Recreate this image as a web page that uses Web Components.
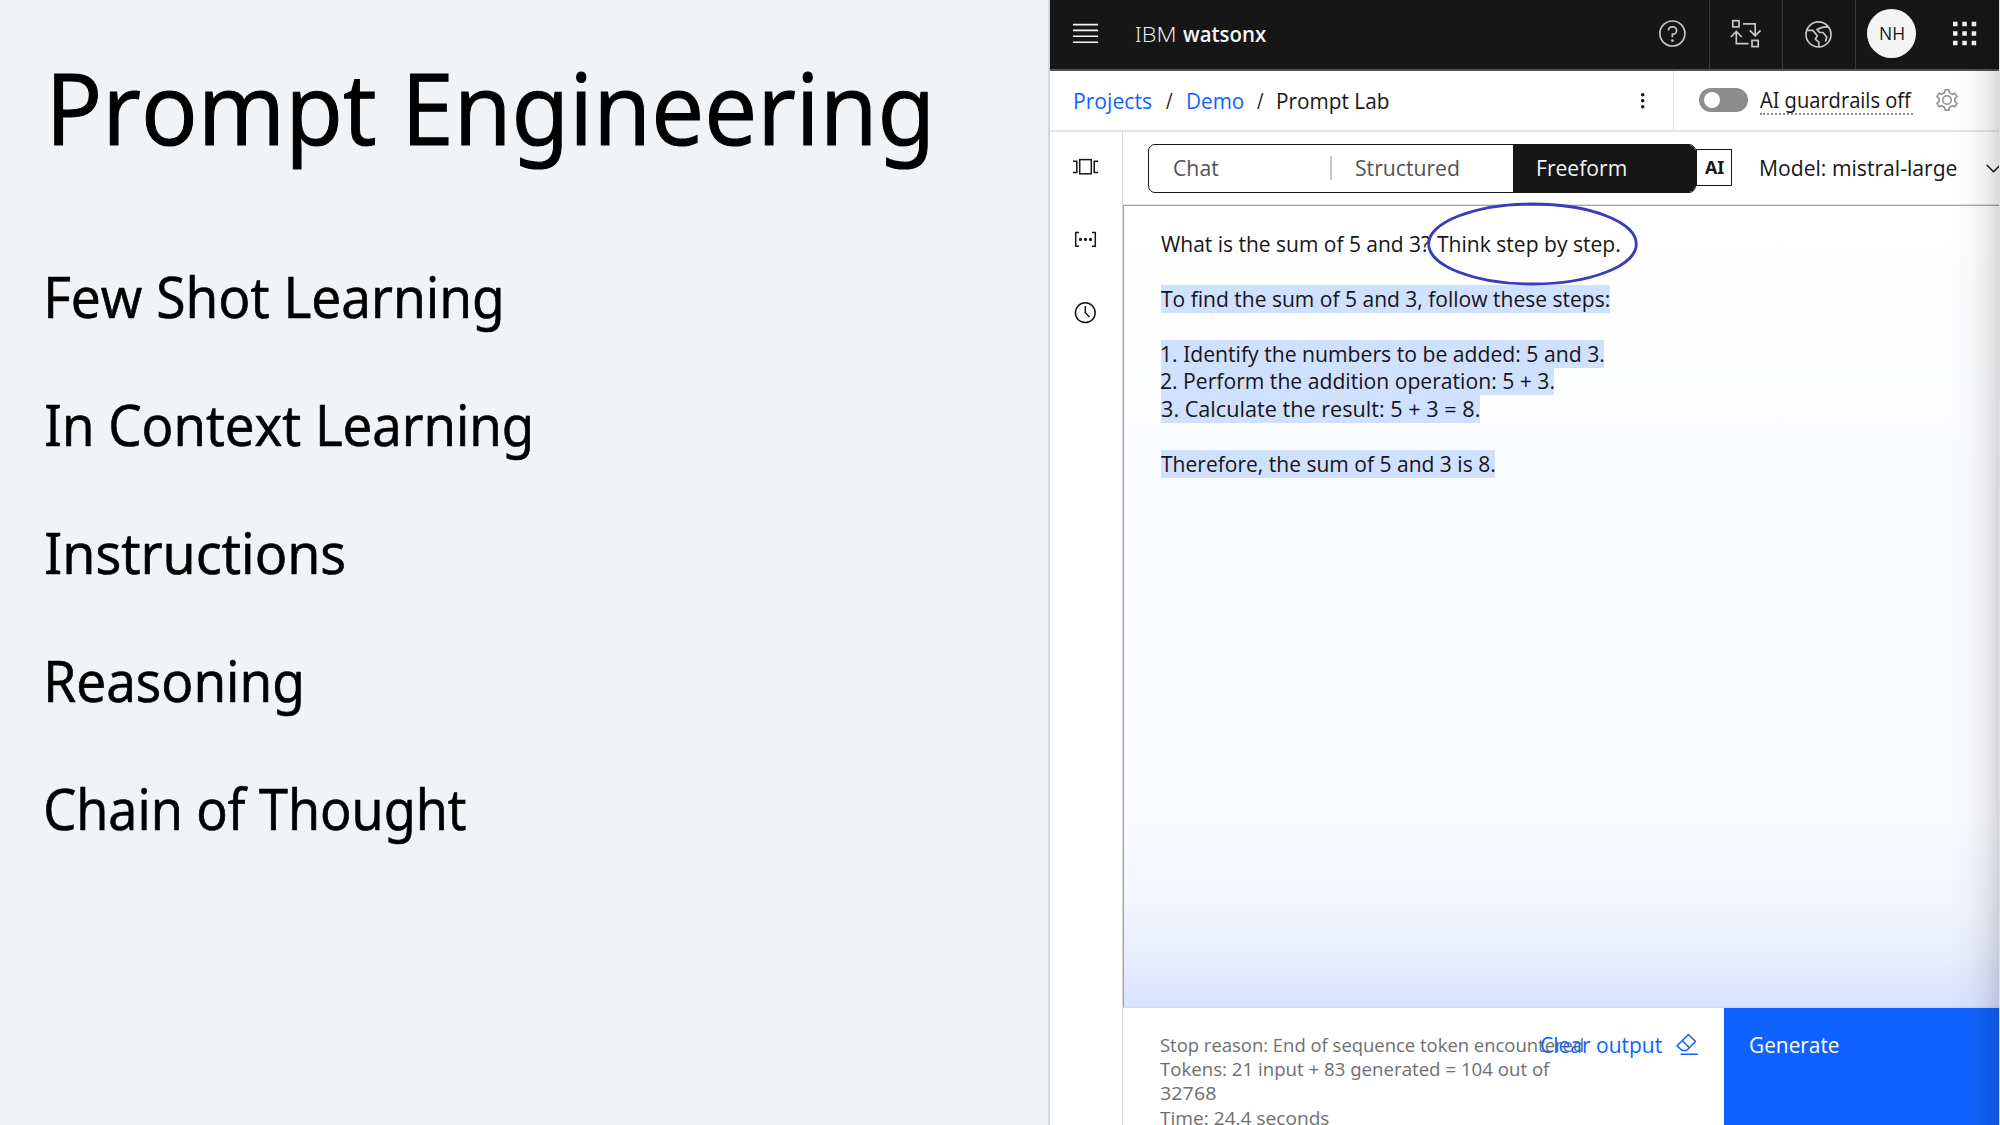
<!DOCTYPE html>
<html lang="en">
<head>
<meta charset="utf-8">
<title>Prompt Engineering</title>
<style>
html,body{margin:0;height:100%;overflow:hidden}
body{font-family:"Open Sans","Noto Sans",sans-serif;color:#161616;background:#f0f4f7}
</style>
</head>
<body>
<slide-page></slide-page>
<script>
const define = (name, html, ready) => customElements.define(name, class extends HTMLElement {
  constructor(){ super(); this.attachShadow({mode:'open'}).innerHTML = html; }
  connectedCallback(){ if (ready) ready.call(this); }
});
const ctx = document.createElement('canvas').getContext('2d');

/* A line of text whose glyphs span exactly the width given by w. */
define('fit-line', `<style>
:host{display:block;flex:none;white-space:nowrap;height:var(--h,28px);line-height:var(--h,28px)}
span{display:inline-block;transform-origin:0 50%;font-feature-settings:"ss01"}
</style><span><slot></slot></span>`, function(){
  const s = this.shadowRoot.querySelector('span'), cs = getComputedStyle(this);
  const w = +this.getAttribute('w');
  this.style.width = w + 'px';
  const fs = this.getAttribute('size'); if (fs) this.style.fontSize = fs + 'px';
  ctx.font = `${cs.fontWeight} ${cs.fontSize} ${cs.fontFamily}`;
  const m = ctx.measureText(this.textContent);
  const left = -m.actualBoundingBoxLeft, right = m.width - m.actualBoundingBoxRight;
  const k = w / (s.offsetWidth - left - right);
  s.style.transform = `translateX(${-left * k}px) scaleX(${k})`;
});

define('topic-list', `<style>
:host{display:block;width:1048px;flex:none;color:#000;background:#f0f4f7}
h1{margin:0;padding:38.5px 0 0 54px;font-weight:400;--h:136px;-webkit-text-stroke:1.1px #000}
ul{margin:0;padding:57.5px 0 0 45px;list-style:none;-webkit-text-stroke:.7px #000}
li{height:128px;--h:128px}
</style>
<h1><fit-line w="880" size="99.5">Prompt Engineering</fit-line></h1>
<ul>
<li style="padding-left:2.5px"><fit-line w="456" size="56">Few Shot Learning</fit-line></li>
<li style="padding-left:4px"><fit-line w="485" size="56">In Context Learning</fit-line></li>
<li style="padding-left:4px"><fit-line w="296" size="56">Instructions</fit-line></li>
<li style="padding-left:2.5px"><fit-line w="257" size="56">Reasoning</fit-line></li>
<li style="padding-left:.5px"><fit-line w="420" size="56">Chain of Thought</fit-line></li>
</ul>`);

define('app-header', `<style>
:host{display:flex;height:69px;background:#161616;border-bottom:2px solid #525252;box-sizing:content-box;color:#f4f4f4;overflow:hidden;height:69px}
svg{display:block;flex:none}
.brand{display:flex;gap:8px;padding:20px 0 0 38px;font-size:21px}
.brand fit-line:first-child{font-weight:300}
.brand fit-line:last-child{font-weight:600}
nav{display:flex;margin-left:auto;margin-right:-1.3px}
nav>div{width:72px;border-right:1px solid #393939}
.me{display:flex;width:144px!important;border:0!important}
.avatar{width:49px;height:49px;border-radius:50%;background:#f4f4f4;color:#161616;margin:9px 0 0 11px;flex:none;--h:49px;box-sizing:border-box;padding-left:12.5px}
</style>
<svg width="49" height="69" viewBox="0 0 49 69" style="width:49px"><path d="M23 24.6h25M23 30.4h25M23 36.2h25M23 42.2h25" stroke="#f4f4f4" stroke-width="1.6"/></svg>
<div class="brand"><fit-line w="37.5">IBM</fit-line><fit-line w="84">watsonx</fit-line></div>
<nav>
<div><svg width="72" height="69" fill="none" stroke="#c6c6c6" stroke-width="1.7"><circle cx="35.4" cy="33.5" r="12.5"/><path d="M31.400 30.500v-.5a3.700 3.700 0 0 1 3.700-3.200h.8a3.700 3.700 0 0 1 0 7.400h-.5v3"/><circle cx="35.4" cy="40.6" r="1.4" fill="#c6c6c6" stroke="none"/></svg></div>
<div><svg width="72" height="69" fill="none" stroke="#c6c6c6" stroke-width="1.7"><rect x="22.8" y="20.7" width="6.2" height="6.2"/><rect x="42" y="40.4" width="6.2" height="6.2"/><path d="M33 23.8h12.2v11.5M39.8 30.3l5.4 5.5 5.4-5.5M38.5 43.6H26.3V32M20.9 37l5.4-5.5 5.4 5.5"/></svg></div>
<div><svg width="72" height="69" fill="none" stroke="#c6c6c6" stroke-width="1.7" stroke-linejoin="round"><circle cx="35.5" cy="34.4" r="12.5"/><path d="M23.600 30.400h6.200l4.500 5.400-2 3.400 3.500 3v4.800M45.500 26.800l-5.500.3-6 2.300 2.700 3.100h3.300l3.700 4.500-1.200 4.600"/></svg></div>
<div class="me"><div class="avatar"><fit-line w="24" size="18">NH</fit-line></div>
<svg width="70" height="69" fill="#f4f4f4"><path d="M37 21.8h4.500v4.500H37zM46.300 21.800h4.500v4.500h-4.500zM55.700 21.800h4.500v4.500h-4.500zM37 31.200h4.500v4.500H37zM46.300 31.200h4.500v4.500h-4.500zM55.700 31.200h4.500v4.500h-4.500zM37 40.700h4.500v4.500H37zM46.300 40.700h4.500v4.500h-4.500zM55.700 40.700h4.500v4.500h-4.500z"/></svg></div>
</nav>`);

define('crumb-bar', `<style>
:host{display:flex;height:59px;border-bottom:2px solid #e5e5e5;font-size:21px}
.crumbs{display:flex;padding:16px 0 0 24.5px;flex:1}
a{color:#0f62fe}
a,i{display:block;font-style:normal}
.guard{display:flex;width:326px;box-sizing:border-box;border-left:1px solid #e0e0e0;padding-left:24.5px}
.toggle{width:49px;height:24px;border-radius:12px;background:#8d8d8d;margin:17px 12.5px 0 0;box-sizing:border-box;padding:4px 5px}
.toggle b{display:block;width:16px;height:16px;border-radius:50%;background:#fff}
.label{margin-top:14.5px;height:27px;border-bottom:2px dotted #8d8d8d}
svg{display:block}
</style>
<div class="crumbs"><a><fit-line w="77.5">Projects</fit-line></a><i style="margin:0 15px 0 13.5px"><fit-line w="7">/</fit-line></i><a><fit-line w="55.5">Demo</fit-line></a><i style="margin:0 14.5px 0 13.5px"><fit-line w="7">/</fit-line></i><i><fit-line w="111">Prompt Lab</fit-line></i>
<svg style="margin:-16px 24px 0 auto" width="12" height="59" fill="#161616"><circle cx="5.7" cy="23.7" r="1.8"/><circle cx="5.7" cy="29.7" r="1.8"/><circle cx="5.7" cy="35.7" r="1.8"/></svg></div>
<div class="guard"><div class="toggle"><b></b></div><div class="label"><fit-line w="153">AI guardrails off</fit-line></div>
<svg width="26" height="26" viewBox="-13 -13 26 26" fill="none" stroke="#8d8d8d" stroke-width="1.5" stroke-linejoin="round" style="margin:16px 0 0 20.5px"><circle r="4.3"/><path d="M-1.800-10.300h3.600l.7 3 2.500 1.500 3-.9 2 3.300-2.200 2.200v2.400l2.200 2.200-2 3.300-3-.9-2.500 1.500-.7 3h-3.600l-.7-3-2.500-1.500-3 .9-2-3.300 2.200-2.200v-2.400l-2.200-2.200 2-3.300 3 .9 2.500-1.500z"/></svg></div>`);

define('side-rail', `<style>
:host{display:block;width:72px;flex:none;border-right:1px solid #d8d8d8}
svg{display:block}
</style><svg width="72" height="220" fill="none" stroke="#161616" stroke-width="1.5">
<rect x="29.7" y="27.6" width="11.6" height="14.2"/><path d="M23 29.2h3.8v11.2H23M48 29.2h-3.8v11.2H48"/>
<path d="M29 100.6h-3.3v13.6H29M42 100.6h3.3v13.6H42"/><g fill="#161616" stroke="none"><circle cx="30.5" cy="107.4" r="1.6"/><circle cx="35.5" cy="107.4" r="1.6"/><circle cx="40.5" cy="107.4" r="1.6"/></g>
<circle cx="35.3" cy="180.7" r="9.9"/><path d="M35.3 174v6.8l4.2 4.2"/></svg>`);

define('mode-bar', `<style>
:host{display:flex;height:73px;box-sizing:border-box;border-bottom:1.5px solid #e0e0e0;padding:12px 0 0 24.5px;font-size:21px;flex:none}
.seg{display:flex;width:548.5px;height:49px;flex:none;box-sizing:border-box;border:1.5px solid #161616;border-radius:7px;overflow:hidden;color:#525252;--h:46.5px}
.seg>div{box-sizing:border-box;padding-left:25px;flex:none}
.rule{width:2px;height:24px;background:#c6c6c6;margin-top:10.5px;padding:0!important}
.ai{width:36px;height:37px;box-sizing:border-box;border:1.5px solid #161616;border-left-width:1px;margin-top:5px;flex:none;font-weight:700;--h:35px;padding-left:7.5px}
.model{margin:2px 0 0 29px;--h:45px}
svg{display:block;margin:20px 0 0 29.5px;flex:none}
</style>
<div class="seg"><div style="width:181px"><fit-line w="44">Chat</fit-line></div><div class="rule"></div><div style="width:181px;padding-left:24px"><fit-line w="103">Structured</fit-line></div><div style="flex:1;background:#161616;color:#f4f4f4;padding-left:25px"><fit-line w="88">Freeform</fit-line></div></div>
<div class="ai"><fit-line w="18.5" size="17.5">AI</fit-line></div>
<div class="model"><fit-line w="195.5">Model: mistral-large</fit-line></div>
<svg width="14" height="10" fill="none" stroke="#161616" stroke-width="1.5"><path d="M.6.8l6.9 6.9L14.4.8"/></svg>`);

define('prompt-editor', `<style>
:host{display:block;height:803px;flex:none;box-sizing:border-box;border:1.3px solid #78a9ff;border-right:0;border-bottom:2px solid #cfdcf5;padding:24.3px 0 0 37px;font-size:21px;background:linear-gradient(180deg,#fff 0,#fbfcff 35%,#fbfcff 75%,#f3f5ff 87%,#e8edfe 94%,#d8e3fe 100%)}
.l{height:27.43px;--h:28px}
mark{display:block;width:max-content;background:#d0e0ff;color:inherit;height:28px}
mark fit-line{margin-right:1px}
.first{display:flex;gap:6.5px}
.ring{position:relative;height:27.43px}
.ring svg{position:absolute;left:-10px;top:-28px;overflow:visible}
</style>
<div class="l first"><fit-line w="269.5">What is the sum of 5 and 3?</fit-line><div class="ring"><fit-line w="182">Think step by step.</fit-line><svg width="212" height="84"><ellipse cx="105.5" cy="42" rx="103.8" ry="40" fill="none" stroke="#3a3cb8" stroke-width="2.8"/></svg></div></div>
<div class="l"></div>
<div class="l"><mark><fit-line w="448">To find the sum of 5 and 3, follow these steps:</fit-line></mark></div>
<div class="l"></div>
<div class="l"><mark><fit-line w="442">1. Identify the numbers to be added: 5 and 3.</fit-line></mark></div>
<div class="l"><mark><fit-line w="392">2. Perform the addition operation: 5 + 3.</fit-line></mark></div>
<div class="l"><mark><fit-line w="318">3. Calculate the result: 5 + 3 = 8.</fit-line></mark></div>
<div class="l"></div>
<div class="l"><mark><fit-line w="333">Therefore, the sum of 5 and 3 is 8.</fit-line></mark></div>`);

define('action-bar', `<style>
:host{display:flex;flex:1;min-height:0;overflow:hidden;font-size:21px}
.stats{width:381px;flex:none;padding:24.5px 0 0 37px;box-sizing:border-box;color:#6f6f6f;font-size:18.5px}
.stats fit-line{--h:24.4px}
.clear{display:flex;width:220px;box-sizing:border-box;flex:none;padding:22.5px 0 0 37px;color:#0f62fe}
.go{flex:1;background:#0f62fe;color:#fff;padding:22.5px 0 0 25.5px}
svg{display:block;margin:2px 0 0 13px}
</style>
<div class="stats"><fit-line w="422.5">Stop reason: End of sequence token encountered</fit-line><fit-line w="391">Tokens: 21 input + 83 generated = 104 out of</fit-line><fit-line w="56">32768</fit-line><fit-line w="168.5">Time: 24.4 seconds</fit-line></div>
<div class="clear"><fit-line w="120.5">Clear output</fit-line><svg width="24" height="24" fill="none" stroke="#0f62fe" stroke-width="1.5" stroke-linejoin="round"><path d="M13.5 1.5L20.5 8.5L11.5 17.5H7L2 12.8zM7.3 7.5L14.2 14.7M5.5 21.3h17.3"/></svg></div>
<div class="go"><fit-line w="88.5">Generate</fit-line></div>`);

define('watson-window', `<style>
:host{display:flex;flex-direction:column;position:relative;width:949px;flex:none;height:1125px;background:#fff;border-left:2px solid #d6d7d9;border-right:1px solid #e0e0e0;box-sizing:content-box;overflow:hidden}
.body{display:flex;flex:1;min-height:0}
.main{display:flex;flex-direction:column;flex:1;min-width:0}
.shade{position:absolute;top:0;right:0;width:50px;height:100%;background:linear-gradient(90deg,rgba(0,0,0,0) 0,rgba(0,0,0,.02) 40%,rgba(0,0,0,.07) 75%,rgba(0,0,0,.15) 100%)}
</style>
<app-header></app-header><crumb-bar></crumb-bar>
<div class="body"><side-rail></side-rail><div class="main"><mode-bar></mode-bar><prompt-editor></prompt-editor><action-bar></action-bar></div></div>
<div class="shade"></div>`);

define('slide-page', `<style>
:host{display:flex;width:2000px;height:1125px;overflow:hidden}
</style><topic-list></topic-list><watson-window></watson-window>`);
</script>
</body>
</html>
